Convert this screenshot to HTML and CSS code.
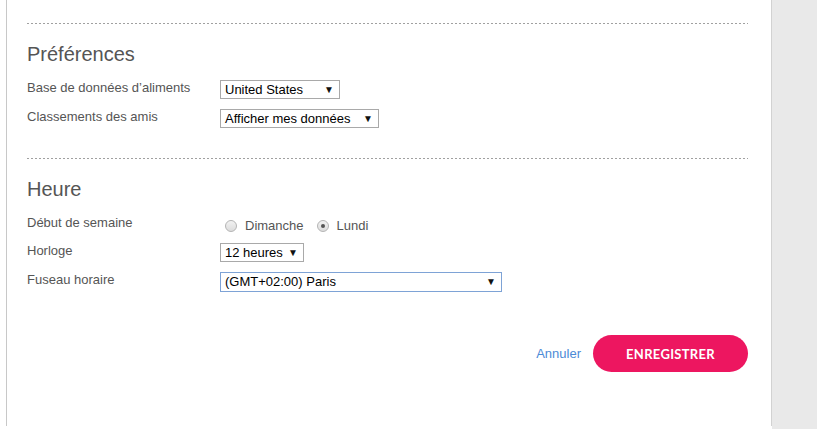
FILE: index.html
```html
<!DOCTYPE html>
<html>
<head>
<meta charset="UTF-8">
<title>Paramètres</title>
<link rel="stylesheet" href="styles.css">
</head>
<body>
<div class="page">
<div class="gutter"></div>
<div class="panel">
  <div class="section">
    <h2>Préférences</h2>
    <div class="row">
      <div class="label">Base de données d’aliments</div>
      <div class="select w120">United States<span class="arrow">▼</span></div>
    </div>
    <div class="row">
      <div class="label">Classements des amis</div>
      <div class="select w159">Afficher mes données<span class="arrow">▼</span></div>
    </div>
  </div>
  <div class="section">
    <h2>Heure</h2>
    <div class="row">
      <div class="label">Début de semaine</div>
      <div class="radios">
        <span class="radio"></span><span class="rtext">Dimanche</span>
        <span class="radio on"></span><span class="rtext">Lundi</span>
      </div>
    </div>
    <div class="row">
      <div class="label">Horloge</div>
      <div class="select w84">12 heures<span class="arrow">▼</span></div>
    </div>
    <div class="row">
      <div class="label">Fuseau horaire</div>
      <div class="select w282 focus">(GMT+02:00) Paris<span class="arrow">▼</span></div>
    </div>
  </div>
  <div class="actions">
    <a class="cancel">Annuler</a>
    <button class="save">ENREGISTRER</button>
  </div>
</div>
<div class="side"></div>
</div>
</body>
</html>
```

FILE: styles.css
```css
body { margin: 0; padding: 0; background: #fff; font-family: "Liberation Sans", Arial, sans-serif; font-size: 13px; color: #555; }
.page { display: flex; height: 429px; overflow: hidden; }
.gutter { width: 6px; flex: none; }
.panel { width: 721px; height: 426px; flex: none; padding: 0 23px 0 20px; border-left: 1px solid #c8c8c8; border-right: 1px solid #d2d2d2; background: #fff; }
.side { flex: 1; background: #e9e9e9; }

.section { margin-top: 23px; padding-top: 19px; background-image: repeating-linear-gradient(to right, #a0a0a0 0 2px, transparent 2px 4px); background-size: 100% 1px; background-repeat: no-repeat; }
.section + .section { margin-top: 30px; }
h2 { margin: 0 0 14px; font-weight: normal; font-size: 20px; line-height: 24px; color: #555; }

.row { display: flex; align-items: flex-start; margin-bottom: 10px; }
.label { width: 193px; flex: none; line-height: 16px; }

.select { box-sizing: border-box; height: 19px; border: 1px solid #a9a9a9; padding: 0 0 0 4px; line-height: 17px; color: #000; position: relative; background: #fff; }
.select .arrow { position: absolute; right: 5px; top: 0; font-size: 10px; line-height: 17px; color: #111; }
.select.focus { border-color: #7ea3d6; height: 20px; line-height: 18px; }
.select.focus .arrow { line-height: 18px; }
.w120 { width: 120px; }
.w159 { width: 159px; }
.w84 { width: 84px; }
.w282 { width: 282px; }

.radios { box-sizing: border-box; display: flex; align-items: center; height: 18px; padding-top: 3px; padding-left: 5px; color: #555; }
.radio { box-sizing: border-box; width: 12px; height: 12px; border-radius: 50%; border: 1px solid #b4b4b4; background: linear-gradient(#f2f2f2, #dcdcdc); position: relative; }
.radio.on::after { content: ""; position: absolute; left: 3px; top: 3px; width: 4px; height: 4px; border-radius: 50%; background: #555; }
.rtext { margin-left: 8px; margin-right: 13px; }

.actions { display: flex; justify-content: flex-end; align-items: center; gap: 12px; margin-top: 43px; }
.cancel { color: #4c8ad6; font-size: 13px; cursor: pointer; }
.save { width: 155px; height: 37px; border: 0; border-radius: 19px; background: #ed1660; color: #fff; font-family: Lato, "Liberation Sans", sans-serif; font-weight: bold; font-size: 13px; letter-spacing: 0.3px; cursor: pointer; }
```
